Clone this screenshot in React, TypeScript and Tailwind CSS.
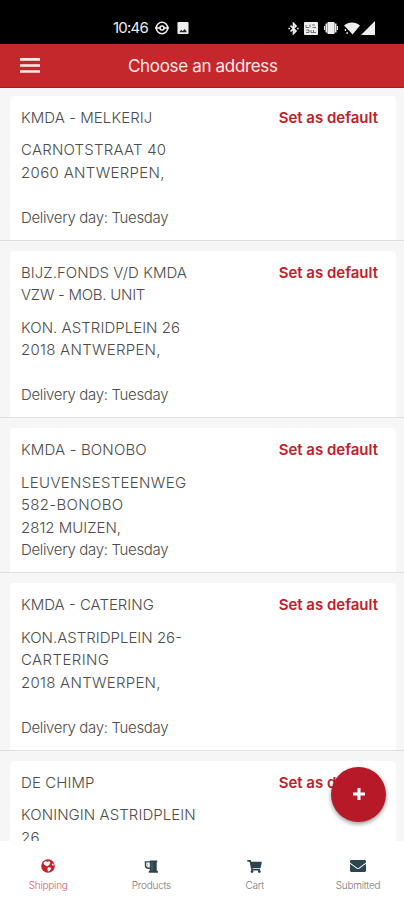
import { FaEnvelope, FaShoppingCart } from "react-icons/fa";

const addresses = [
  {
    name: [{ text: "KMDA - MELKERIJ", tracking: "tracking-[0.06px]" }],
    lines: [
      { text: "CARNOTSTRAAT 40", tracking: "tracking-[0.2px]" },
      { text: "2060 ANTWERPEN,", tracking: "tracking-[0.33px]" },
      { text: "", tracking: "" },
    ],
    delivery: "Delivery day: Tuesday",
  },
  {
    name: [
      { text: "BIJZ.FONDS V/D KMDA", tracking: "tracking-[0.05px]" },
      { text: "VZW - MOB. UNIT", tracking: "tracking-[-0.27px]" },
    ],
    lines: [
      { text: "KON. ASTRIDPLEIN 26", tracking: "tracking-[0.04px]" },
      { text: "2018 ANTWERPEN,", tracking: "tracking-[0.27px]" },
      { text: "", tracking: "" },
    ],
    delivery: "Delivery day: Tuesday",
  },
  {
    name: [{ text: "KMDA - BONOBO", tracking: "tracking-[0.15px]" }],
    lines: [
      { text: "LEUVENSESTEENWEG", tracking: "tracking-[0.33px]" },
      { text: "582-BONOBO", tracking: "tracking-[0.35px]" },
      { text: "2812 MUIZEN,", tracking: "" },
    ],
    delivery: "Delivery day: Tuesday",
  },
  {
    name: [{ text: "KMDA - CATERING", tracking: "" }],
    lines: [
      { text: "KON.ASTRIDPLEIN 26-", tracking: "" },
      { text: "CARTERING", tracking: "tracking-[0.4px]" },
      { text: "2018 ANTWERPEN,", tracking: "tracking-[0.27px]" },
      { text: "", tracking: "" },
    ],
    delivery: "Delivery day: Tuesday",
  },
  {
    name: [{ text: "DE CHIMP", tracking: "tracking-[0.1px]" }],
    lines: [
      { text: "KONINGIN ASTRIDPLEIN", tracking: "tracking-[0.06px]" },
      { text: "26", tracking: "tracking-[0.2px]" },
    ],
  },
];

function EarthIcon() {
  return (
    <svg viewBox="0 0 14 14" className="h-[14px] w-[14px]">
      <circle cx="7" cy="7" r="6.8" fill="currentColor" />
      <path d="M2.8 3 5 2l1.6.9L8.2 2l1.2 1.6-.9 1.9-1.8 1.700-1-.1L3.600 6 2.500 4.600z" fill="#fff" />
      <path d="m6.900 8.300 2.400.2.900 1-1.500 2.500-1.700.5-.6-2.300zM10.900 4.600l1.500.5.3 1.500-1.300.1z" fill="#fff" />
    </svg>
  );
}

function MugIcon() {
  return (
    <svg viewBox="0 0 14 13" className="h-[13px] w-[14px]" fill="currentColor">
      <path d="M5 .5h8.300v1.300l-.6.6v7.800l1.300 1.200v1.400H4.700v-1.400L5.800 10.200V.5z" />
      <path d="M6 1.900H1.500v3.300c0 1.900 1.300 3.100 3.200 3.100H6" fill="none" stroke="currentColor" strokeWidth="1.400" />
      <path d="M3.700 3.500v3.200" stroke="#8fa2a8" strokeWidth=".8" />
      <path d="M8 2.500v7.500" stroke="#7b9299" strokeWidth=".5" />
    </svg>
  );
}

function StatusBar() {
  return (
    <div className="flex h-[44px] shrink-0 items-center bg-black pt-[12px] text-[#eee]">
      <span className="ml-[113px] w-[36px] whitespace-nowrap text-[15px] leading-5 tracking-[-0.8px]">10:46</span>
      <svg viewBox="0 0 14 14" className="ml-[6px] h-[14px] w-[14px]" fill="none" stroke="currentColor" strokeWidth="1.6">
        <circle cx="7" cy="7" r="5.7" />
        <circle cx="7" cy="7" r="2" />
        <path d="M0 7h5M9 7h5" />
      </svg>
      <svg viewBox="0 0 12 13" className="ml-[8px] h-3 w-3">
        <rect width="12" height="13" rx="1" fill="currentColor" />
        <path d="m2 11 2-2.500 1.500 1.500L8 7.500l2.200 3.500z" fill="#222" />
      </svg>
      <svg viewBox="0 0 11 14" className="ml-[99px] h-[13px] w-[11px]" fill="none" stroke="currentColor" strokeWidth="1.8">
        <path d="m2.200 3.800 6 6-2.700 2.700v-11l2.700 2.700-6 6" />
        <path d="M0 7h1.800M9.200 7H11" />
      </svg>
      <svg viewBox="0 0 14 13" className="ml-[5px] h-[13px] w-[14px]">
        <rect width="14" height="13" rx="1" fill="currentColor" />
        <path d="M2 3v2.500h3M6 2.500v3M8 3h3M8.500 5.500H12M2 8h3v2.500H2M7 8v2.500h5M9.500 8v2" fill="none" stroke="#555" strokeWidth=".8" />
      </svg>
      <svg viewBox="0 0 14 12" className="ml-[6px] h-3 w-[14px]" fill="currentColor">
        <rect x="3.400" width="7.200" height="12" rx=".8" />
        <path d="M1.500 1.500h1.700v9H1.500zM0 4h1v4H0zM10.800 1.500h1.700v9h-1.700zM13 4h1v4h-1z" />
      </svg>
      <svg viewBox="0 0 16 13" className="ml-[6px] h-[13px] w-4" fill="currentColor">
        <path d="M0 3.500C4.500-.4 11.500-.4 16 3.500l-7.500 9L5 8.500 3.500 7z" />
        <path d="M.8 7h1.300v2H.8zM2.500 10h1.300v2H2.500z" />
      </svg>
      <svg viewBox="0 0 14 14" className="ml-[1px] h-[14px] w-[14px]" fill="currentColor">
        <path d="M14 0v14H0z" />
      </svg>
    </div>
  );
}

const tabs = [
  { label: "Shipping", icon: <EarthIcon />, color: "text-[#c6202b]", labelColor: "text-[#d5606c]" },
  { label: "Products", icon: <MugIcon />, color: "text-[#2c454e]", labelColor: "text-[#777]" },
  { label: "Cart", icon: <FaShoppingCart className="h-[13px] w-[15px]" />, color: "text-[#2c454e]", labelColor: "text-[#777]" },
  { label: "Submitted", icon: <FaEnvelope className="h-[16px] w-[16px]" />, color: "text-[#2c454e]", labelColor: "text-[#777]" },
];

export default function App() {
  return (
    <div className="relative flex h-[900px] w-[404px] flex-col overflow-hidden bg-[#f6f6f6] font-['Inter',sans-serif]">
      <StatusBar />
      <header className="flex h-[43.5px] shrink-0 items-center border-b border-[#bd1118] bg-[#c4272c]">
        <svg viewBox="0 0 20 15" className="ml-5 mt-px h-[15px] w-5" fill="#fdeaea">
          <path d="M0 0h20v2.700H0zM0 6.200h20v2.600H0zM0 12.200h20v2.600H0z" />
        </svg>
        <h1 className="ml-[88px] mt-[3px] whitespace-nowrap text-[17px] tracking-[-0.33px] text-[#fdeaea]">Choose an address</h1>
      </header>

      <main className="-mt-[1.8px] min-h-0 flex-1 overflow-hidden text-[15px] font-light leading-[22.5px] text-[#4c4c4c]">
        {addresses.map((address) => (
          <div key={address.name[0].text} className="border-b border-[#dddfe0] pl-[10px] pr-[8px] pt-[10px]">
            <div className="rounded-t bg-white px-[11px] pb-[10.5px] pt-[11px]">
              <div className="flex items-start justify-between">
                <div className="whitespace-nowrap">
                  {address.name.map((line) => (
                    <div key={line.text} className={line.tracking}>{line.text}</div>
                  ))}
                </div>
                <button className="mr-[7px] h-[22.5px] text-[15px] font-semibold text-[#c0202a]">Set as default</button>
              </div>
              <div className="mt-[10px] whitespace-nowrap">
                {address.lines.map((line, index) => (
                  <div key={index} className={`h-[22.5px] ${line.tracking}`}>{line.text}</div>
                ))}
                {address.delivery && <div className="tracking-[-0.34px]">{address.delivery}</div>}
              </div>
            </div>
          </div>
        ))}
      </main>

      <button className="absolute left-[331px] top-[767px] flex h-[55px] w-[55px] items-center justify-center rounded-full bg-[#b71929] shadow-[0_2px_4px_rgba(0,0,0,0.4)]">
        <svg viewBox="0 0 12 12" className="-mt-[2px] h-3 w-3" stroke="#fff" strokeWidth="3">
          <path d="M6 0v12M0 6h12" />
        </svg>
      </button>

      <nav className="flex h-[59px] shrink-0 bg-white">
        {tabs.map((tab) => (
          <div key={tab.label} className={`flex w-[103.3px] shrink-0 flex-col items-center pr-[7px] pt-[18px] ${tab.color}`}>
            <div className="flex h-[14px] items-center">{tab.icon}</div>
            <span className={`mt-[6px] text-[10px] font-light leading-[13px] tracking-[-0.25px] ${tab.labelColor}`}>{tab.label}</span>
          </div>
        ))}
      </nav>
    </div>
  );
}
